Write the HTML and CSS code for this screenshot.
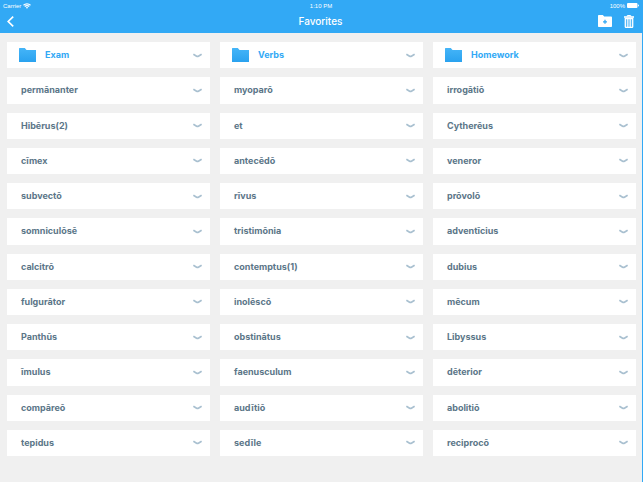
FILE: index.html
```
<!DOCTYPE html>
<html lang="en">
<head>
    <meta charset="UTF-8">
    <meta name="viewport" content="width=device-width, initial-scale=1.0">
    <title>Favorites</title>
    <link rel="stylesheet" href="styles.css">
</head>
<body>
    <header class="header">
        <div class="status-bar">
            <div class="carrier">
                <span>Carrier</span>
                <svg width="8" height="6" viewBox="0 0 16 12" fill="none" stroke="#fff" stroke-width="2.4">
                    <path d="M1 4.5a10 10 0 0 1 14 0M3.6 7.2a6.2 6.2 0 0 1 8.8 0"/>
                    <path d="M8 11.5 5.6 9.1a3.4 3.4 0 0 1 4.8 0z" fill="#fff" stroke="none"/>
                </svg>
            </div>
            <span>1:10 PM</span>
            <div class="battery">
                <span>100%</span>
                <svg width="12" height="5" viewBox="0 0 24 10" fill="#fff">
                    <rect width="21" height="10" rx="2"/>
                    <path d="M22 3q2 0 2 2t-2 2z"/>
                </svg>
            </div>
        </div>
        <nav class="nav-bar">
            <button class="icon-button" aria-label="Back">
                <svg width="7" height="11" viewBox="0 0 7 11" fill="none" stroke="#fff" stroke-width="1.7">
                    <path d="M6.2.7 1.2 5.5l5 4.8"/>
                </svg>
            </button>
            <h1>Favorites</h1>
            <div class="actions">
                <button class="icon-button" aria-label="New folder">
                    <svg width="14" height="12" viewBox="0 0 14 12" fill="#fff">
                        <path d="M0 .8Q0 0 .8 0h4l1.4 1.6h7q.8 0 .8.8v8.8q0 .8-.8.8H.8Q0 12 0 11.2z"/>
                        <path d="M7 4.8v4M5 6.8h4" stroke="#32a9f5" stroke-width="1.3"/>
                    </svg>
                </button>
                <button class="icon-button" aria-label="Delete">
                    <svg width="10" height="13" viewBox="0 0 10 13" fill="none" stroke="#fff">
                        <path d="M3.3 1.5V.5h3.4v1"/>
                        <path d="M0 2h10" stroke-width="1.6"/>
                        <path d="M1.3 3.5v8.2q0 .7.7.7h6q.7 0 .7-.7V3.5z" stroke-width="1.3"/>
                        <path d="M3.3 4v8M5 4v8M6.7 4v8"/>
                    </svg>
                </button>
            </div>
        </nav>
    </header>

    <main class="favorites" id="favorites"></main>

    <script>
        const folders = ['Exam', 'Verbs', 'Homework'];
        const words = [
            'permānanter', 'myoparō', 'irrogātiō',
            'Hibērus(2)', 'et', 'Cytherēus',
            'cīmex', 'antecēdō', 'veneror',
            'subvectō', 'rīvus', 'prōvolō',
            'somniculōsē', 'tristimōnia', 'adventīcius',
            'calcitrō', 'contemptus(1)', 'dubius',
            'fulgurātor', 'inolēscō', 'mēcum',
            'Panthūs', 'obstinātus', 'Libyssus',
            'īmulus', 'faenusculum', 'dēterior',
            'compāreō', 'audītiō', 'abolitiō',
            'tepidus', 'sedīle', 'reciprocō'
        ];

        const folderIcon = `
            <svg class="folder-icon" width="17" height="14" viewBox="0 0 17 14">
                <defs>
                    <linearGradient id="folderFill" x2="0" y2="1">
                        <stop stop-color="#45b5f8"/>
                        <stop offset="1" stop-color="#2aa2ef"/>
                    </linearGradient>
                </defs>
                <path d="M0 .6Q0 0 .6 0h5.2l1.7 2H17v12H0z" fill="url(#folderFill)"/>
            </svg>`;

        function card(name, isFolder) {
            return `
                <button class="card ${isFolder ? 'folder' : ''}">
                    ${isFolder ? folderIcon : ''}
                    <span class="name">${name}</span>
                    <svg width="9" height="5" viewBox="0 0 9 5" fill="none" stroke="#a9c0d0" stroke-width="1.7">
                        <path d="M.4 1.2 3.6 3.2q.9.5 1.8 0L8.6 1.2"/>
                    </svg>
                </button>`;
        }

        document.getElementById('favorites').innerHTML =
            folders.map(name => card(name, true)).join('') +
            words.map(name => card(name, false)).join('');
    </script>
</body>
</html>
```
FILE: styles.css
```
* {
    box-sizing: border-box;
}
body {
    display: flex;
    flex-direction: column;
    min-height: 100vh;
    margin: 0;
    background-color: #f0f0f0;
    font-family: "Liberation Sans", Arial, sans-serif;
}
button {
    font: inherit;
    border: none;
    cursor: pointer;
}
svg {
    display: block;
    flex: none;
}
.header {
    background-color: #32a9f5;
    color: white;
}
.status-bar,
.nav-bar {
    display: grid;
    grid-template-columns: 1fr auto 1fr;
    align-items: center;
}
.status-bar {
    height: 11px;
    padding: 0 4px 0 3px;
    font-size: 6px;
}
.carrier,
.battery {
    display: flex;
    align-items: center;
    gap: 2px;
}
.battery {
    justify-content: flex-end;
}
.nav-bar {
    height: 22px;
    padding: 0 9px 2px 7px;
}
.nav-bar h1 {
    margin: 0;
    font-family: Inter, sans-serif;
    font-size: 10px;
    font-weight: 500;
}
.icon-button {
    justify-self: start;
    padding: 0;
    background: none;
}
.actions {
    display: flex;
    justify-content: flex-end;
    align-items: center;
    gap: 12px;
}
.favorites {
    flex: 1;
    display: grid;
    grid-template-columns: repeat(3, 1fr);
    grid-auto-rows: 1fr;
    gap: 9px 10px;
    padding: 9px 6px 26px 7px;
    border-right: 1px solid #32a9f5;
}
.card {
    display: flex;
    align-items: center;
    min-height: 26px;
    padding: 0 8px 0 14px;
    background-color: white;
    color: #5b7688;
    font-family: Inter, sans-serif;
    font-size: 9px;
    font-weight: 700;
    text-align: left;
}
.folder {
    padding-left: 12px;
    color: #32a9f5;
}
.folder-icon {
    margin-right: 9px;
}
.name {
    flex: 1;
    padding-bottom: 1px;
}
```
